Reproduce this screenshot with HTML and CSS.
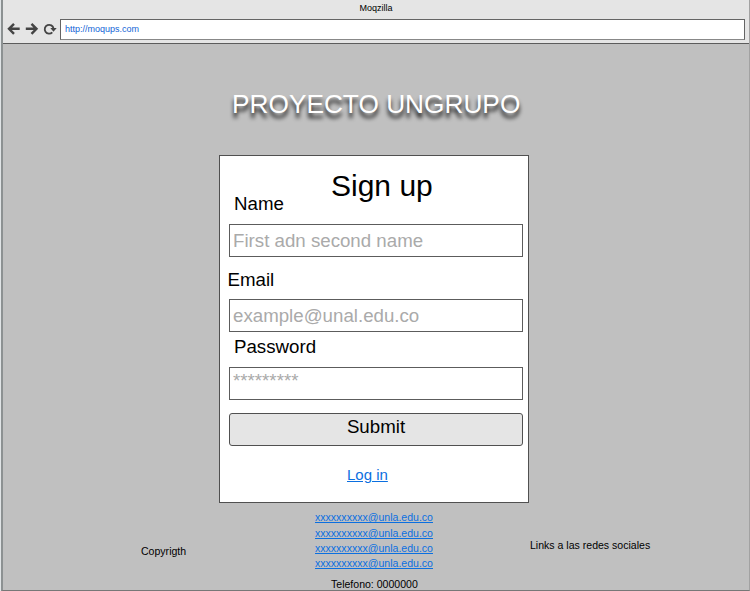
FILE: index.html
```html
<!DOCTYPE html>
<html lang="es">
<head>
<meta charset="utf-8">
<title>Moqzilla</title>
<link rel="stylesheet" href="styles.css">
</head>
<body>
<div class="window">
  <header class="chrome">
    <div class="window-title">Moqzilla</div>
    <div class="toolbar">
      <svg class="nav-icons" width="50" height="14" viewBox="0 0 50 14" fill="none" stroke="#444" stroke-width="2.400">
        <path d="M12.700 6.800H2.500M7 1.800L2 6.800l5 5"/>
        <path d="M18.800 6.800H29M24.500 1.800l5 5-5 5"/>
        <path d="M45.300 10.300A4.400 4.400 0 1 1 46.500 6.500" stroke-width="1.800"/>
        <path d="M43.300 6h6.400l-3.200 3.700z" fill="#444" stroke="none"/>
      </svg>
      <div class="address">http://moqups.com</div>
    </div>
  </header>
  <main class="page">
    <h1 class="brand">PROYECTO UNGRUPO</h1>
    <form class="card">
      <h2 class="heading">Sign up</h2>
      <label class="label name" for="name">Name</label>
      <input class="field" id="name" type="text" placeholder="First adn second name">
      <label class="label email" for="email">Email</label>
      <input class="field" id="email" type="text" placeholder="example@unal.edu.co">
      <label class="label password" for="password">Password</label>
      <input class="field secret" id="password" type="text" placeholder="*********">
      <button class="submit" type="button">Submit</button>
      <a class="login" href="#">Log in</a>
    </form>
    <footer class="footer">
      <div class="copyright">Copyrigth</div>
      <div class="contact">
        <a href="#">xxxxxxxxxx@unla.edu.co</a>
        <a href="#">xxxxxxxxxx@unla.edu.co</a>
        <a href="#">xxxxxxxxxx@unla.edu.co</a>
        <a href="#">xxxxxxxxxx@unla.edu.co</a>
        <span class="phone">Telefono: 0000000</span>
      </div>
      <div class="social">Links a las redes sociales</div>
    </footer>
  </main>
</div>
</body>
</html>
```
FILE: styles.css
```css
* { box-sizing: border-box; }
body {
  margin: 0;
  background: #e0e4e6;
  color: #000;
  font-family: "Liberation Sans", Arial, sans-serif;
  overflow: hidden;
}
.window {
  width: 749px;
  height: 591px;
  margin-left: 1px;
  border: solid #777;
  border-width: 0 1px 1px 2px;
  border-left-color: #8c9192;
  border-right-color: #a2a2a2;
  background: #c0c0c0;
  display: flex;
  flex-direction: column;
}
.chrome {
  height: 44px;
  flex: none;
  background: #e5e5e5;
  border-bottom: 1px solid #5c5c5c;
}
.window-title {
  height: 19px;
  padding-top: 2px;
  font-size: 9px;
  line-height: 12px;
  text-align: center;
}
.toolbar { display: flex; padding: 0 4px 0 4px; }
.nav-icons { margin: 3px 3px 0 0; }
.address {
  flex: 1;
  height: 21px;
  padding-left: 4px;
  border: 1px solid #646464;
  border-bottom-color: #888;
  background: #fff;
  color: #1264d6;
  font-size: 9px;
  line-height: 18px;
}
.page { display: flex; flex-direction: column; }
.brand {
  margin: 44px 0 0 229px;
  height: 67px;
  font-size: 26.25px;
  font-weight: 400;
  line-height: 32px;
  color: #fff;
  text-shadow: 0 5px 4px rgba(0, 0, 0, .95);
  white-space: nowrap;
}
.card {
  width: 310px;
  height: 348px;
  margin-left: 216px;
  padding: 12px 5px 0 9px;
  border: 1px solid #505050;
  background: #fff;
  display: flex;
  flex-direction: column;
}
.heading {
  margin: 0 0 0 102px;
  height: 25px;
  font-size: 30px;
  font-weight: 400;
  line-height: 36px;
}
.label { font-size: 18.7px; line-height: 22px; }
.name { margin-left: 5px; height: 31px; }
.email { margin: 12px 0 0 -1.5px; height: 30px; }
.password { margin: 4px 0 0 5px; height: 31px; }
.field {
  width: 294px;
  height: 33px;
  flex: none;
  padding: 0 3px;
  border: 1px solid #5c5c5c;
  border-radius: 0;
  background: #fff;
  font: 18.7px/22px "Liberation Sans", Arial, sans-serif;
}
.secret { padding-bottom: 5px; }
.field::placeholder { color: #aaa; opacity: 1; }
.submit {
  width: 294px;
  height: 33px;
  flex: none;
  margin-top: 13px;
  padding: 0 0 6px;
  border: 1px solid #505050;
  border-radius: 3px;
  background: #e5e5e5;
  color: #000;
  font: 18.7px/22px "Liberation Sans", Arial, sans-serif;
}
.login {
  align-self: flex-start;
  margin: 19px 0 0 118px;
  font-size: 15px;
  line-height: 20px;
}
a { color: #0b6fe0; }
.footer {
  display: grid;
  grid-template-columns: 312px 215px 1fr;
  font-size: 10.55px;
  line-height: 15px;
}
.copyright { padding: 41px 0 0 138px; }
.social { padding-top: 35px; }
.contact { display: flex; flex-direction: column; align-items: flex-start; padding-top: 7px; }
.contact a:first-child { margin-bottom: 1px; }
.phone { margin: 6px 0 0 16px; }
```
